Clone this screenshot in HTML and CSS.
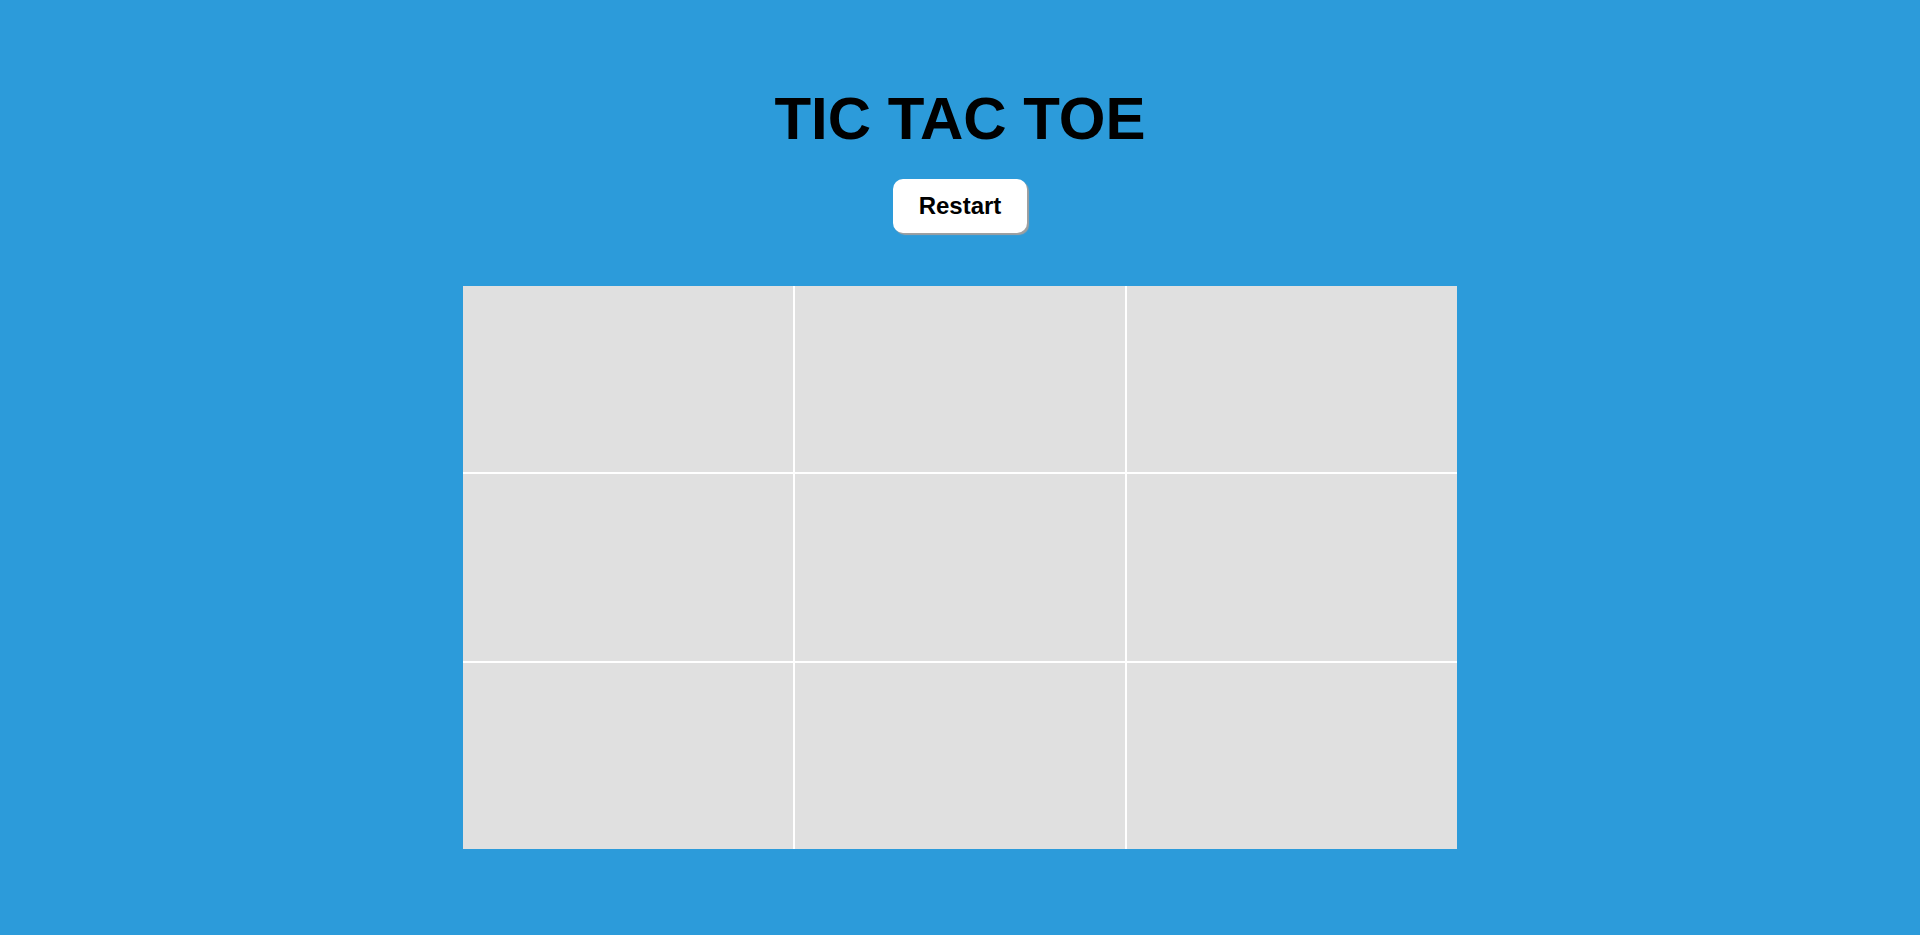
FILE: index.html
```html
<!DOCTYPE html>
<html lang="en">
<head>
<meta charset="utf-8">
<title>Tic Tac Toe</title>
<link rel="stylesheet" href="styles.css">
</head>
<body>
<main class="app">
  <h1 class="title">TIC TAC TOE</h1>
  <button class="restart" type="button">Restart</button>
  <div class="board">
    <div class="cell"></div>
    <div class="cell"></div>
    <div class="cell"></div>
    <div class="cell"></div>
    <div class="cell"></div>
    <div class="cell"></div>
    <div class="cell"></div>
    <div class="cell"></div>
    <div class="cell"></div>
  </div>
</main>
</body>
</html>
```
FILE: styles.css
```css
html, body {
  margin: 0;
  padding: 0;
  height: 100%;
}
body {
  background: #2c9bda;
  font-family: "Liberation Sans", Arial, sans-serif;
  color: #000;
}
.app {
  display: flex;
  flex-direction: column;
  align-items: center;
}
.title {
  margin: 85px 0 27px;
  font-size: 60px;
  font-weight: bold;
  line-height: 67px;
}
.restart {
  font-family: "Liberation Sans", Arial, sans-serif;
  font-size: 24px;
  font-weight: bold;
  color: #000;
  background: #fff;
  border: none;
  border-radius: 10px;
  padding: 13px 26px;
  line-height: 28px;
  box-shadow: 2px 2px 1px #a0a0a0;
  cursor: pointer;
}
.board {
  margin-top: 53px;
  width: 994px;
  height: 563px;
  display: grid;
  grid-template-columns: 1fr 1fr 1fr;
  grid-template-rows: 1fr 1fr 1fr;
  gap: 2px;
  background: #fff;
}
.cell {
  background: #e0e0e0;
}
```
